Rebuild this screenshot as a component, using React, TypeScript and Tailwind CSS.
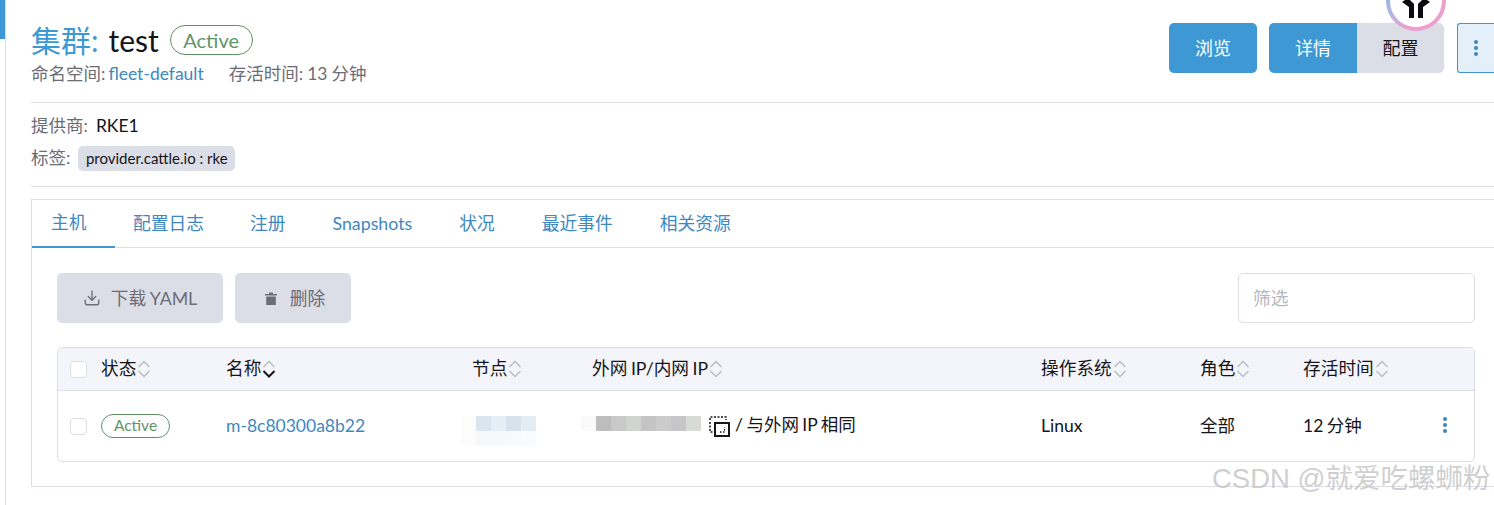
import { Download } from "lucide-react";

const FONT = "font-['Lato','Noto_Sans_CJK_SC',sans-serif]";
const COLS = "grid grid-cols-[30px_125px_246px_120px_449px_159px_103px_1fr] pl-[13px] items-center";

function SortIcon({ active }: { active?: boolean }) {
  return (
    <svg width="14" height="18" viewBox="0 0 14 18" fill="none" className="ml-[1px] shrink-0">
      <path d="M1.500 7 L7 1.500 L12.500 7" stroke="#b9bbc3" strokeWidth="1.400" />
      <path
        d="M1.500 11 L7 16.500 L12.500 11"
        stroke={active ? "#141419" : "#b9bbc3"}
        strokeWidth={active ? 2 : 1.400}
      />
    </svg>
  );
}

function HeadCell({ label, active }: { label: string; active?: boolean }) {
  return (
    <div className="flex items-center text-[17.7px] text-[#141419] [word-spacing:-1px]">
      <span className="whitespace-nowrap">{label}</span>
      <SortIcon active={active} />
    </div>
  );
}

function Dots({ className }: { className: string }) {
  return (
    <span className={`flex flex-col items-center gap-[2px] ${className}`}>
      <i className="block h-[4px] w-[4px] rounded-full bg-current" />
      <i className="block h-[4px] w-[4px] rounded-full bg-current" />
      <i className="block h-[4px] w-[4px] rounded-full bg-current" />
    </span>
  );
}

function Mosaic({ shades }: { shades: string[] }) {
  return (
    <span className="flex h-[15px] shrink-0">
      {shades.map((c, i) => (
        <span key={i} className={`h-full w-[15px] ${c}`} />
      ))}
    </span>
  );
}

function Avatar() {
  return (
    <div className="absolute left-[1386px] top-[-29px] h-[60px] w-[60px] rounded-full bg-[conic-gradient(from_200deg,#ee9fce,#a9b8e6,#6fb6e6,#8cc5ea,#ee9fce_60%,#ee9fce)] p-[4px]">
      <div className="flex h-full w-full items-center justify-center rounded-full bg-white">
        <svg width="34" height="34" viewBox="0 0 34 34" fill="#0b0b0f" className="mt-[14px]">
          <path d="M3 11 L9 7 L15 13 L15 27 L10 27 L10 16 Z" />
          <path d="M31 11 L25 7 L19 13 L19 27 L24 27 L24 16 Z" />
        </svg>
      </div>
    </div>
  );
}

export default function App() {
  return (
    <div className={`relative flex h-[505px] w-[1494px] overflow-hidden bg-white ${FONT}`}>
      {/* side rail */}
      <div className="h-full w-[6px] shrink-0 border-r border-[#dcdee7]">
        <div className="h-[39px] w-[5px] bg-[#3d98d3]" />
      </div>

      <main className="min-w-0 flex-1 pl-[25px]">
        {/* header */}
        <header className="flex h-[103px] items-start justify-between border-b border-[#dcdee7]">
          <div className="pt-[21px]">
            <div className="flex h-[38px] items-center">
              <span className="text-[30px] leading-none text-[#3d98d3]">集群:</span>
              <span className="ml-[10px] text-[30px] leading-none text-[#141419]">test</span>
              <span className="ml-[11px] flex h-[30px] items-center rounded-full border border-[#5f9165] px-[12.5px] text-[20px] text-[#5f9468]">
                Active
              </span>
            </div>
            <div className="mt-[3px] flex text-[17.5px] leading-[24px] text-[#6c6c76] [word-spacing:-0.5px]">
              <span>命名空间:</span>
              <span className="ml-[3px] text-[#3d88bf]">fleet-default</span>
              <span className="ml-[25px]">存活时间: 13 分钟</span>
            </div>
          </div>
          <div className="flex pt-[23px] text-[18px]">
            <button className="h-[50px] w-[88px] rounded-[5px] bg-[#3d98d3] text-white">浏览</button>
            <div className="ml-[12px] flex">
              <button className="h-[50px] w-[88px] rounded-l-[5px] bg-[#3d98d3] text-white">详情</button>
              <button className="h-[50px] w-[87px] rounded-r-[5px] bg-[#dcdee7] text-[#141419]">配置</button>
            </div>
            <button className="ml-[13px] flex h-[50px] w-[37px] items-center justify-center rounded-l-[3px] border border-r-0 border-[#3d98d3] bg-[#e3f0f9]">
              <Dots className="text-[#3d88bf]" />
            </button>
          </div>
        </header>

        {/* meta */}
        <section className="flex h-[84px] flex-col border-b border-[#dcdee7] pt-[11px] text-[17.5px] text-[#6c6c76]">
          <div className="flex h-[24px] items-center">
            <span>提供商:</span>
            <span className="ml-[8px] text-[#141419]">RKE1</span>
          </div>
          <div className="mt-[7px] flex items-center">
            <span>标签:</span>
            <span className="ml-[8px] flex h-[25px] items-center rounded-[5px] bg-[#dcdee7] px-[7.5px] text-[15px] text-[#141419]">
              provider.cattle.io : rke
            </span>
          </div>
        </section>

        {/* tabs box */}
        <section className="mt-[12px] h-[288px] border border-r-0 border-[#dcdee7]">
          <nav className="flex h-[48px] border-b border-[#dcdee7] pb-[1px] text-[17.75px] text-[#3d88bf]">
            <span className="flex h-[48px] w-[83px] items-center border-b-2 border-[#3d98d3] pb-[1px] pl-[19px]">主机</span>
            <span className="ml-[18px] flex items-center">配置日志</span>
            <span className="ml-[46px] flex items-center">注册</span>
            <span className="ml-[47px] flex items-center">Snapshots</span>
            <span className="ml-[47px] flex items-center">状况</span>
            <span className="ml-[47px] flex items-center">最近事件</span>
            <span className="ml-[47px] flex items-center">相关资源</span>
          </nav>

          <div className="pl-[25px] pr-[19px] pt-[25px]">
            <div className="flex items-start justify-between">
              <div className="flex gap-[12px] text-[17.75px] text-[#6c6c76]">
                <button className="flex h-[50px] w-[166px] items-center justify-center rounded-[5px] bg-[#dcdee7] [word-spacing:-1px]">
                  <Download size={18} strokeWidth={1.8} className="mr-[10px]" />
                  下载 YAML
                </button>
                <button className="flex h-[50px] w-[116px] items-center justify-center rounded-[5px] bg-[#dcdee7] pl-[4px]">
                  <svg width="12" height="13" viewBox="0 0 12 13" fill="#6c6c76" className="mr-[13px]">
                    <path d="M4 0.500 H8 V2 H12 V3.500 H0 V2 H4 Z" />
                    <path d="M1.200 4.500 H10.800 V13 H1.200 Z" />
                  </svg>
                  删除
                </button>
              </div>
              <div className="flex h-[50px] w-[237px] items-center rounded-[5px] border border-[#dcdee7] px-[14px] text-[17.75px] text-[#b5b7bf]">
                筛选
              </div>
            </div>

            <div className="mt-[24px] h-[115px] overflow-hidden rounded-[5px] border border-[#dcdee7]">
              <div className={`${COLS} h-[43px] border-b border-[#dcdee7] bg-[#f4f5fa]`}>
                <span className="-ml-[1px] h-[17px] w-[17px] rounded-[4px] border border-[#dcdee7] bg-white" />
                <HeadCell label="状态" />
                <HeadCell label="名称" active />
                <HeadCell label="节点" />
                <HeadCell label="外网 IP/内网 IP" />
                <HeadCell label="操作系统" />
                <HeadCell label="角色" />
                <HeadCell label="存活时间" />
              </div>
              <div className={`${COLS} h-[70px] text-[17.5px] text-[#141419]`}>
                <span className="-ml-[1px] h-[17px] w-[17px] rounded-[4px] border border-[#dcdee7] bg-white" />
                <span className="flex h-[24px] w-[69px] items-center justify-center rounded-full border border-[#5f9165] text-[15.5px] text-[#5f9468]">
                  Active
                </span>
                <span className="text-[#3d88bf]">m-8c80300a8b22</span>
                <div className="-ml-[11px] mt-[9px] flex flex-col">
                  <Mosaic shades={["bg-[#fbfcfc]", "bg-[#d9e6ef]", "bg-[#e4eef4]", "bg-[#d6e3ec]", "bg-[#e3edf3]"]} />
                  <Mosaic shades={["bg-[#fcfcfc]", "bg-[#f6f8fa]", "bg-[#f6f8fa]", "bg-[#f7f9fa]", "bg-[#fafbfc]"]} />
                </div>
                <div className="-ml-[11px] flex items-center">
                  <span className="-translate-y-[3px]">
                    <Mosaic
                      shades={[
                        "bg-[#fafafa]",
                        "bg-[#bdbdbd]",
                        "bg-[#c9c9c9]",
                        "bg-[#d2d4d2]",
                        "bg-[#c4c4c4]",
                        "bg-[#cbcbcb]",
                        "bg-[#c6c6ca]",
                        "bg-[#d8dad8]",
                      ]}
                    />
                  </span>
                  <svg width="21" height="21" viewBox="0 0 21 21" fill="none" stroke="#141419" className="ml-[8px] shrink-0">
                    <path d="M1 4 V1 H17 V4" strokeWidth="1.500" strokeDasharray="2 1.500" />
                    <path d="M1 6 V16 H4" strokeWidth="1.500" strokeDasharray="2 1.500" />
                    <rect x="6" y="7" width="14" height="13" strokeWidth="2" />
                    <path d="M11 16 H15.500 V11" strokeWidth="1.300" strokeDasharray="1.500 1.500" />
                  </svg>
                  <span className="ml-[5px] -translate-y-[1px] whitespace-nowrap [word-spacing:-1px]">/ 与外网 IP 相同</span>
                </div>
                <span>Linux</span>
                <span>全部</span>
                <span className="[word-spacing:-1px]">12 分钟</span>
              </div>
            </div>
          </div>
        </section>
      </main>

      {/* row action menu */}
      <Dots className="absolute left-[1443px] top-[417px] text-[#3d88bf]" />
      <Avatar />
      <span className="absolute left-[1212px] top-[462px] whitespace-nowrap font-['Liberation_Sans','Noto_Sans_CJK_SC',sans-serif] text-[27.5px] leading-[34px] text-[#c9c9c9]/90">
        CSDN @就爱吃螺蛳粉
      </span>
    </div>
  );
}
